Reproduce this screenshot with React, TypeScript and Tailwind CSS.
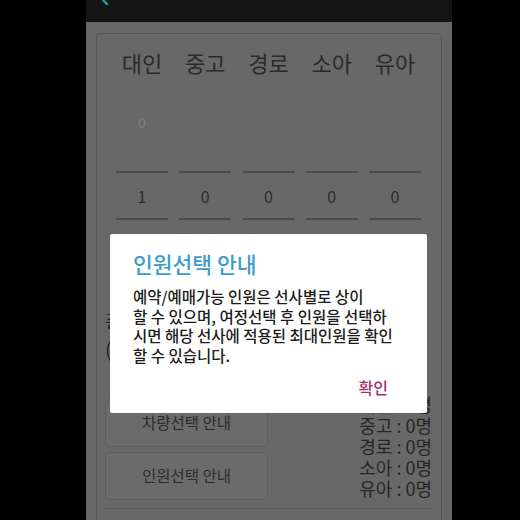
import React from "react";

const cols = [
  { label: "대인", hint: "0", value: "1" },
  { label: "중고", hint: "", value: "0" },
  { label: "경로", hint: "", value: "0" },
  { label: "소아", hint: "", value: "0" },
  { label: "유아", hint: "", value: "0" },
];

const counts = [
  ["대인", "1"],
  ["중고", "0"],
  ["경로", "0"],
  ["소아", "0"],
  ["유아", "0"],
];

export default function App() {
  return (
    <div
      className="relative w-[520px] h-[520px] bg-black flex overflow-hidden"
      style={{ fontFamily: '"Noto Sans CJK KR", "Noto Sans", sans-serif' }}
    >
      <div className="ml-[86px] w-[366px] h-full flex flex-col">
        <div className="h-[22px] bg-[#141414] relative shrink-0">
          <svg className="absolute left-[16px] top-0" width="8" height="6" viewBox="0 0 8 6">
            <path d="M1 0 L5 4" stroke="#2f8f8f" strokeWidth="2.5" strokeLinecap="round" />
          </svg>
        </div>
        <div className="flex-1 bg-[#676767] px-[10px] pt-[11px]">
          <div className="h-[520px] border border-[#575757] rounded-[5px] bg-[#686868]">
            <div className="grid grid-cols-5 gap-x-[11.25px] pl-[19px] pr-[20px] pt-[13px]">
              {cols.map((c) => (
                <div key={c.label} className="flex flex-col">
                  <div className="h-[30px] flex items-center justify-center text-[22px] leading-none text-[#2a2a2a]">
                    {c.label}
                  </div>
                  <div className="h-[96px] pt-[35px] border-b-2 border-[#4c4c4c] flex justify-center">
                    <span className="h-[20px] text-[14px] leading-[20px] text-[#808080]">{c.hint}</span>
                  </div>
                  <div className="h-[47px] flex items-center justify-center border-b-2 border-[#4c4c4c] text-[16px] text-[#2e2e2e]">
                    {c.value}
                  </div>
                </div>
              ))}
            </div>
            <div className="px-[8px]">
              <div className="mt-[89px] h-[24px] leading-[24px] text-[20px] text-[#222]">총</div>
              <div className="mt-[4px] h-[24px] leading-[24px] text-[20px] text-[#222]">(</div>
              <div className="mt-[33px] flex justify-between pr-[1px]">
                <div className="w-[163px] pt-[5px] flex flex-col gap-[5px]">
                  <div className="h-[48px] rounded-[5px] border border-[#5d5d5d] bg-[#6b6b6b] flex items-center justify-center text-[15.5px] text-[#2c2c2c]">
                    차량선택 안내
                  </div>
                  <div className="h-[48px] rounded-[5px] border border-[#5d5d5d] bg-[#6b6b6b] flex items-center justify-center text-[15.5px] text-[#2c2c2c]">
                    인원선택 안내
                  </div>
                </div>
                <div className="flex flex-col items-end text-[18px] leading-[21px] text-[#262626]">
                  {counts.map(([k, v]) => (
                    <div key={k}>
                      {k} : {v}명
                    </div>
                  ))}
                </div>
              </div>
              <div className="mt-[8px] border-t border-[#5a5a5a]" />
            </div>
          </div>
        </div>
      </div>

      <div className="absolute left-[110px] top-[234px] w-[317px] h-[179px] bg-white rounded-[2px] flex flex-col pl-[23px] pr-[16px] pt-[16px]">
        <div className="h-[28px] leading-[28px] text-[21.5px] font-medium text-[#3c9ccc]">인원선택 안내</div>
        <div className="mt-[9px] text-[15.5px] leading-[19.5px] font-medium text-[#1c1c1c] whitespace-nowrap">
          <div>예약/예매가능 인원은 선사별로 상이</div>
          <div>할 수 있으며, 여정선택 후 인원을 선택하</div>
          <div>시면 해당 선사에 적용된 최대인원을 확인</div>
          <div>할 수 있습니다.</div>
        </div>
        <div className="mt-[12px] flex justify-end pr-[23px]">
          <span className="h-[20px] leading-[20px] text-[16px] font-medium text-[#a3306e]">확인</span>
        </div>
      </div>
    </div>
  );
}
